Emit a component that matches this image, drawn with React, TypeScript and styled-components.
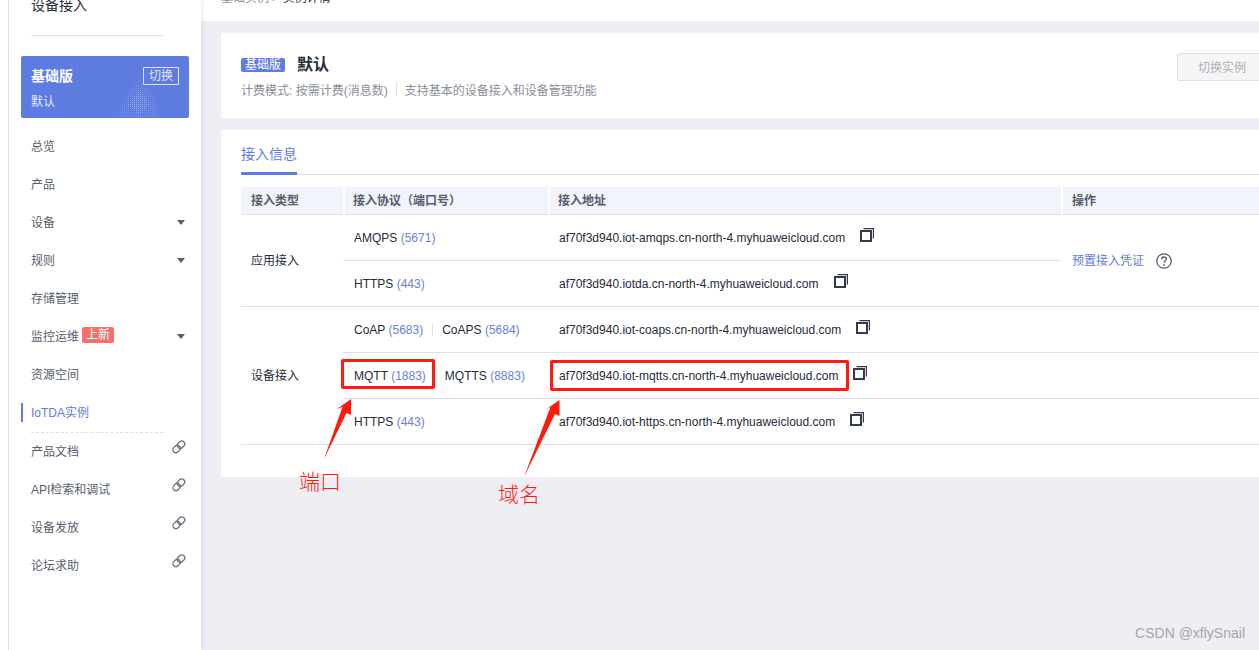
import React from 'react';
import styled, { createGlobalStyle } from 'styled-components';

const GlobalStyle = createGlobalStyle`
  html, body {
    margin: 0;
    padding: 0;
    background: #fff;
  }
  body {
    font-family: "Liberation Sans", "Noto Sans CJK SC", sans-serif;
    font-size: 12px;
    color: #252b3a;
  }
  * {
    box-sizing: border-box;
  }
`;

const navItems = [
  { label: '总览' },
  { label: '产品' },
  { label: '设备', caret: true },
  { label: '规则', caret: true },
  { label: '存储管理' },
  { label: '监控运维', caret: true, fresh: true },
  { label: '资源空间' },
  { label: 'IoTDA实例', active: true },
];

const externalItems = ['产品文档', 'API检索和调试', '设备发放', '论坛求助'];

const CopyIcon = () => (
  <CopySvg width="14" height="14" viewBox="0 0 14 14" fill="none">
    <rect x="1" y="3" width="10" height="10" stroke="#333b4d" strokeWidth="2" />
    <path d="M3.5 0.6H13.4V10.5" stroke="#333b4d" strokeWidth="1.2" />
  </CopySvg>
);

const HelpIcon = () => (
  <svg width="16" height="16" viewBox="0 0 16 16" fill="none">
    <circle cx="8" cy="8" r="7.2" stroke="#575d6c" strokeWidth="1.3" />
    <path d="M5.6 6.3C5.6 4.9 6.7 4 8 4C9.4 4 10.4 4.9 10.4 6.1C10.4 7.7 8 7.7 8 9.8" stroke="#575d6c" strokeWidth="1.3" />
    <circle cx="8" cy="11.8" r="0.9" fill="#575d6c" />
  </svg>
);

const ChainIcon = () => (
  <ChainSvg width="14" height="14" viewBox="0 0 14 14" fill="none">
    <rect x="6" y="0.6" width="6" height="8" rx="3" transform="rotate(45 9 4.6)" stroke="#6c7280" strokeWidth="1.3" />
    <rect x="1.6" y="5" width="6" height="8" rx="3" transform="rotate(45 4.6 9)" stroke="#6c7280" strokeWidth="1.3" />
  </ChainSvg>
);

const Protocol = ({ name, port }: { name: string; port: number }) => (
  <span>
    {name} <Port>({port})</Port>
  </span>
);

const Address = ({ children }: { children: string }) => (
  <AddressCell>
    {children}
    <CopyIcon />
  </AddressCell>
);

const App = () => (
  <Page>
    <GlobalStyle />
    <LeftStrip />
    <Sidebar>
      <SideTitle>设备接入</SideTitle>
      <SideDivider />
      <EditionCard>
        <EditionTop>
          <EditionName>基础版</EditionName>
          <SwitchTag>切换</SwitchTag>
        </EditionTop>
        <EditionSub>默认</EditionSub>
        <EditionPattern width="42" height="40" viewBox="0 0 42 40">
          <defs>
            <pattern id="dots" width="2" height="2" patternUnits="userSpaceOnUse">
              <rect width="1" height="1" fill="#ffffff" fillOpacity="0.16" />
            </pattern>
            <pattern id="dotsCore" width="2" height="2" patternUnits="userSpaceOnUse">
              <rect width="1" height="1" fill="#ffffff" fillOpacity="0.3" />
            </pattern>
          </defs>
          <path d="M21 0L36 20L42 40H0L6 20Z" fill="url(#dots)" />
          <path d="M21 12L32 26L21 36L10 26Z" fill="url(#dotsCore)" />
        </EditionPattern>
      </EditionCard>
      <NavList>
        {navItems.map(item => (
          <NavItem key={item.label} $active={item.active}>
            {item.label}
            {item.fresh && <NewTag>上新</NewTag>}
            {item.caret && <Caret />}
          </NavItem>
        ))}
        <NavDashed />
        {externalItems.map(label => (
          <NavItem key={label}>
            {label}
            <ChainIcon />
          </NavItem>
        ))}
      </NavList>
    </Sidebar>
    <Main>
      <TopBar>
        <Crumbs>
          基础实例 &gt; <strong>实例详情</strong>
        </Crumbs>
      </TopBar>
      <SummaryCard>
        <div>
          <SummaryTitle>
            <EditionBadge>基础版</EditionBadge>
            <InstanceName>默认</InstanceName>
          </SummaryTitle>
          <SummaryMeta>
            <span>计费模式: 按需计费(消息数)</span>
            <MetaDivider />
            <span>支持基本的设备接入和设备管理功能</span>
          </SummaryMeta>
        </div>
        <SwitchButton>切换实例</SwitchButton>
      </SummaryCard>
      <AccessCard>
        <Tabs>
          <Tab>接入信息</Tab>
        </Tabs>
        <Table>
          <HeadCell>接入类型</HeadCell>
          <HeadCell>接入协议（端口号）</HeadCell>
          <HeadCell>接入地址</HeadCell>
          <HeadCell>操作</HeadCell>

          <TypeCell $span={2}>应用接入</TypeCell>
          <Cell>
            <Protocol name="AMQPS" port={5671} />
          </Cell>
          <Address>af70f3d940.iot-amqps.cn-north-4.myhuaweicloud.com</Address>
          <OperationCell>
            <OperationLink>预置接入凭证</OperationLink>
            <HelpIcon />
          </OperationCell>
          <Cell>
            <Protocol name="HTTPS" port={443} />
          </Cell>
          <Address>af70f3d940.iotda.cn-north-4.myhuaweicloud.com</Address>

          <TypeCell $span={3}>设备接入</TypeCell>
          <Cell>
            <Protocol name="CoAP" port={5683} />
            <ProtocolDivider />
            <Protocol name="CoAPS" port={5684} />
          </Cell>
          <Address>af70f3d940.iot-coaps.cn-north-4.myhuaweicloud.com</Address>
          <EmptyCell />
          <Cell>
            <Protocol name="MQTT" port={1883} />
            <ProtocolGap />
            <Protocol name="MQTTS" port={8883} />
          </Cell>
          <Address>af70f3d940.iot-mqtts.cn-north-4.myhuaweicloud.com</Address>
          <EmptyCell />
          <Cell>
            <Protocol name="HTTPS" port={443} />
          </Cell>
          <Address>af70f3d940.iot-https.cn-north-4.myhuaweicloud.com</Address>
          <EmptyCell />
        </Table>
      </AccessCard>
    </Main>

    {/* annotations drawn over the screenshot */}
    <RedBox $x={341} $y={359} $w={94} $h={30} />
    <RedBox $x={550} $y={360} $w={299} $h={31} />
    <ArrowLayer width="1259" height="650" viewBox="0 0 1259 650">
      <path d="M351 399L351 415L346.5 413L324 459L342.5 407L337 409Z" fill="#ff1a0d" />
      <path d="M559.5 400L559.5 416L555 414L524 477L550.5 407L545 410Z" fill="#ff1a0d" />
    </ArrowLayer>
    <NoteLabel $x={299} $y={469}>端口</NoteLabel>
    <NoteLabel $x={498} $y={482}>域名</NoteLabel>
    <Watermark>CSDN @xflySnail</Watermark>
  </Page>
);

const Page = styled.div`
  position: relative;
  display: flex;
  width: 1259px;
  height: 650px;
  overflow: hidden;
  background: #eeeff5;
`;

const LeftStrip = styled.div`
  flex: 0 0 9px;
  background: #fff;
  border-right: 1px solid #dfe1e6;
`;

const Sidebar = styled.aside`
  flex: 0 0 192px;
  background: #fff;
  padding: 0 12px;
  box-shadow: 2px 0 4px rgba(37, 43, 58, 0.08);
  z-index: 1;
`;

const SideTitle = styled.div`
  height: 20px;
  margin-top: -5px;
  padding-left: 10px;
  font-size: 14px;
  line-height: 20px;
  color: #252b3a;
`;

const SideDivider = styled.div`
  width: 132px;
  height: 1px;
  margin: 20px 0 20px 10px;
  background: #dfe1e6;
`;

const EditionCard = styled.div`
  position: relative;
  height: 62px;
  padding: 11px 10px 0;
  border-radius: 2px;
  background: #5e7ce0;
  color: #fff;
  overflow: hidden;
`;

const EditionTop = styled.div`
  display: flex;
  align-items: flex-start;
  justify-content: space-between;
  height: 18px;
`;

const EditionName = styled.span`
  font-size: 14px;
  line-height: 18px;
  font-weight: 700;
`;

const SwitchTag = styled.span`
  width: 36px;
  height: 18px;
  border: 1px solid rgba(255, 255, 255, 0.8);
  border-radius: 1px;
  font-size: 12px;
  line-height: 17px;
  text-align: center;
  color: rgba(255, 255, 255, 0.85);
`;

const EditionSub = styled.div`
  margin-top: 8px;
  line-height: 18px;
  color: rgba(255, 255, 255, 0.85);
`;

const EditionPattern = styled.svg`
  position: absolute;
  right: 29px;
  bottom: 0;
`;

const NavList = styled.nav`
  margin-top: 8px;
`;

const NavItem = styled.div<{ $active?: boolean }>`
  position: relative;
  display: flex;
  align-items: center;
  height: 38px;
  padding-left: 10px;
  color: ${({ $active }) => ($active ? '#5e7ce0' : '#575d6c')};

  ${({ $active }) =>
    $active &&
    `
    &::before {
      content: '';
      position: absolute;
      left: 0;
      top: 11px;
      width: 2px;
      height: 19px;
      background: #5e7ce0;
    }
  `}
`;

const NewTag = styled.span`
  width: 32px;
  height: 16px;
  margin-left: 3px;
  border-radius: 2px;
  background: #f66f6a;
  color: #fff;
  line-height: 16px;
  text-align: center;
`;

const Caret = styled.span`
  position: absolute;
  right: 4px;
  top: 18px;
  border-top: 5px solid #575d6c;
  border-left: 4px solid transparent;
  border-right: 4px solid transparent;
`;

const ChainSvg = styled.svg`
  position: absolute;
  right: 3px;
  top: 9px;
`;

const NavDashed = styled.div`
  width: 132px;
  margin: 2px 0 -2px 10px;
  border-top: 1px dashed #dfe1e6;
`;

const Main = styled.main`
  flex: 1;
  min-width: 0;
  display: flex;
  flex-direction: column;
  align-items: stretch;
  padding-left: 20px;
`;

const TopBar = styled.div`
  flex: 0 0 21px;
  margin: 0 0 12px -20px;
  padding-left: 20px;
  background: #fff;
  overflow: hidden;
`;

const Crumbs = styled.div`
  margin-top: -11px;
  line-height: 18px;
  color: #8a8e99;

  strong {
    font-weight: 400;
    color: #252b3a;
  }
`;

const SummaryCard = styled.section`
  display: flex;
  justify-content: space-between;
  align-items: flex-start;
  height: 85px;
  margin-bottom: 12px;
  padding: 20px 0 0 20px;
  background: #fff;
`;

const SummaryTitle = styled.div`
  display: flex;
  align-items: center;
  height: 24px;
`;

const EditionBadge = styled.span`
  width: 44px;
  height: 14px;
  border-radius: 2px;
  background: #5e7ce0;
  color: #fff;
  line-height: 14px;
  text-align: center;
`;

const InstanceName = styled.span`
  margin: 0 0 5px 12px;
  font-size: 16px;
  font-weight: 700;
  color: #252b3a;
`;

const SummaryMeta = styled.div`
  display: flex;
  align-items: center;
  margin-top: 3px;
  height: 18px;
  color: #8a8e99;
`;

const MetaDivider = styled.span`
  width: 1px;
  height: 14px;
  margin: 0 8px;
  background: #dfe1e6;
`;

const SwitchButton = styled.button`
  flex: 0 0 88px;
  height: 28px;
  margin: 0 -6px 0 0;
  padding: 0 0 2px 2px;
  border: 1px solid #dfe1e6;
  border-radius: 2px;
  background: #f5f5f6;
  color: #adb0b8;
  font: inherit;
`;

const AccessCard = styled.section`
  height: 347px;
  padding: 10px 0 0 20px;
  background: #fff;
`;

const Tabs = styled.div`
  display: flex;
  height: 35px;
  border-bottom: 1px solid #dfe1e6;
`;

const Tab = styled.div`
  height: 35px;
  border-bottom: 3px solid #5e7ce0;
  font-size: 14px;
  line-height: 29px;
  color: #5e7ce0;
`;

const Table = styled.div`
  display: grid;
  grid-template-columns: 102px 205px 513px 1fr;
  grid-template-rows: 28px repeat(5, 46px);
  margin-top: 12px;
`;

const HeadCell = styled.div`
  display: flex;
  align-items: center;
  padding: 0 0 3px 8px;
  background: #f1f4fb;
  border-bottom: 1px solid #dfe1e6;
  border-left: 2px solid #fff;
  color: #575d6c;
  font-weight: 700;

  &:first-child {
    padding-left: 10px;
    border-left: 0;
  }

  &:nth-child(4) {
    padding-left: 9px;
  }
`;

const Cell = styled.div`
  display: flex;
  align-items: center;
  padding-left: 11px;
  border-bottom: 1px solid #dfe1e6;
  color: #252b3a;
`;

const TypeCell = styled(Cell)<{ $span: number }>`
  grid-row: span ${({ $span }) => $span};
  padding: 0 0 2px 10px;
`;

const AddressCell = styled(Cell)``;

const OperationCell = styled(Cell)`
  grid-row: span 2;
`;

const EmptyCell = styled(Cell)``;

const OperationLink = styled.span`
  margin: 0 12px 2px 0;
  color: #5e7ce0;
`;

const CopySvg = styled.svg`
  flex: none;
  margin: 0 0 6px 15px;
`;

const Port = styled.span`
  color: #6a7fd6;
`;

const ProtocolDivider = styled.span`
  width: 1px;
  height: 12px;
  margin: 0 9px;
  background: #dfe1e6;
`;

const ProtocolGap = styled.span`
  width: 19px;
`;

const RedBox = styled.div<{ $x: number; $y: number; $w: number; $h: number }>`
  position: absolute;
  left: ${({ $x }) => $x}px;
  top: ${({ $y }) => $y}px;
  width: ${({ $w }) => $w}px;
  height: ${({ $h }) => $h}px;
  border: 3px solid #ff1a0d;
  border-radius: 2px;
`;

const ArrowLayer = styled.svg`
  position: absolute;
  left: 0;
  top: 0;
  pointer-events: none;
`;

const NoteLabel = styled.span<{ $x: number; $y: number }>`
  position: absolute;
  left: ${({ $x }) => $x}px;
  top: ${({ $y }) => $y}px;
  font-size: 21px;
  line-height: 26px;
  font-weight: 300;
  color: #ff1a0d;
`;

const Watermark = styled.span`
  position: absolute;
  right: 14px;
  bottom: 9px;
  font-size: 14px;
  color: #a6a6a6;
`;

export default App;
